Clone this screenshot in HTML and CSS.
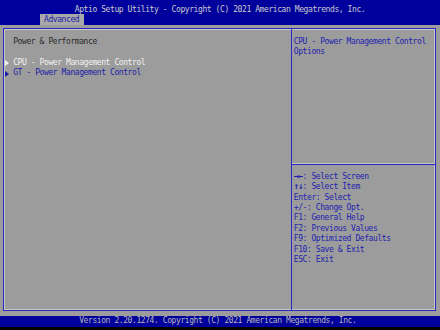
FILE: index.html
```html
<!DOCTYPE html>
<html>
<head>
<meta charset="utf-8">
<link rel="stylesheet" href="styles.css">
</head>
<body>
<div class="screen">
  <header class="top">
    <div class="title">Aptio Setup Utility - Copyright (C) 2021 American Megatrends, Inc.</div>
    <div class="tabs"><span class="tab">Advanced</span></div>
  </header>
  <main class="main">
    <div class="box">
      <section class="left">
        <div class="row heading">Power &amp; Performance</div>
        <div class="row"></div>
        <div class="row item selected"><span class="tri"></span>CPU - Power Management Control</div>
        <div class="row item"><span class="tri"></span>GT - Power Management Control</div>
      </section>
      <aside class="right">
        <div class="help">
          <div class="row">CPU - Power Management Control</div>
          <div class="row">Options</div>
        </div>
        <div class="keys">
          <div class="row"><span class="arr">→←</span>: Select Screen</div>
          <div class="row"><span class="arr">↑↓</span>: Select Item</div>
          <div class="row">Enter: Select</div>
          <div class="row">+/-: Change Opt.</div>
          <div class="row">F1: General Help</div>
          <div class="row">F2: Previous Values</div>
          <div class="row">F9: Optimized Defaults</div>
          <div class="row">F10: Save &amp; Exit</div>
          <div class="row">ESC: Exit</div>
        </div>
      </aside>
    </div>
  </main>
  <footer class="bottom">Version 2.20.1274. Copyright (C) 2021 American Megatrends, Inc.</footer>
</div>
</body>
</html>
```
FILE: styles.css
```css
html, body {
  margin: 0;
  padding: 0;
}
body {
  width: 440px;
  height: 330px;
  background: #000;
  overflow: hidden;
  font-family: "DejaVu Sans Mono", "Liberation Mono", monospace;
  font-size: 8px;
  letter-spacing: -0.416px;
  line-height: 10.45px;
}
.screen {
  display: flex;
  flex-direction: column;
  width: 440px;
  height: 326.5px;
}
.top {
  background: #00009c;
  height: 25px;
  padding-top: 4.5px;
  box-sizing: border-box;
  color: #cccccc;
}
.title {
  height: 10.45px;
  text-align: center;
  white-space: nowrap;
}
.tabs {
  padding-left: 39.6px;
  display: flex;
  align-items: flex-end;
  height: 10.05px;
}
.tab {
  background: #a8a8a8;
  color: #1c1ca8;
  padding: 0 4.4px;
  height: 11px;
  line-height: 11.5px;
}
.main {
  background: #9c9c9c;
  height: 291.5px;
  padding: 3px 4px 0 3px;
  box-sizing: border-box;
}
.box {
  height: 283px;
  border: 1px solid #2828c4;
  box-shadow: inset 1px 1px 0 #c8c8c0, inset -1px -1px 0 #c8c8c0;
  box-sizing: border-box;
  display: flex;
}
.left {
  width: 287px;
  padding: 7.85px 0 0 9.2px;
  box-sizing: border-box;
}
.row {
  height: 10.45px;
  white-space: nowrap;
}
.heading {
  color: #2a2a2a;
}
.item {
  color: #1c1ca8;
  position: relative;
}
.item.selected {
  color: #f2f2f2;
}
.tri {
  position: absolute;
  left: -8px;
  top: 2.5px;
  width: 0;
  height: 0;
  border-left: 4px solid currentColor;
  border-top: 3px solid transparent;
  border-bottom: 3px solid transparent;
}
.right {
  flex: 1;
  border-left: 1px solid #2828c4;
  box-shadow: inset -1px 0 0 #c8c8c0;
  display: flex;
  flex-direction: column;
  color: #2222b0;
}
.help {
  height: 136px;
  padding: 7.85px 0 0 1.8px;
  box-sizing: border-box;
  border-bottom: 1px solid #2828c4;
  box-shadow: inset 0 -1px 0 #c8c8c0;
}
.keys {
  padding: 6.7px 0 0 1.8px;
}
.arr {
  display: inline-block;
  width: 8.8px;
  height: 10.45px;
  font-size: 9px;
  font-weight: bold;
  letter-spacing: -1.02px;
  line-height: 10.45px;
  overflow: hidden;
  vertical-align: top;
  position: relative;
  top: -1px;
}
.bottom {
  background: #00009c;
  color: #b8b8b8;
  height: 10.5px;
  padding-left: 79.2px;
  white-space: nowrap;
}
```
